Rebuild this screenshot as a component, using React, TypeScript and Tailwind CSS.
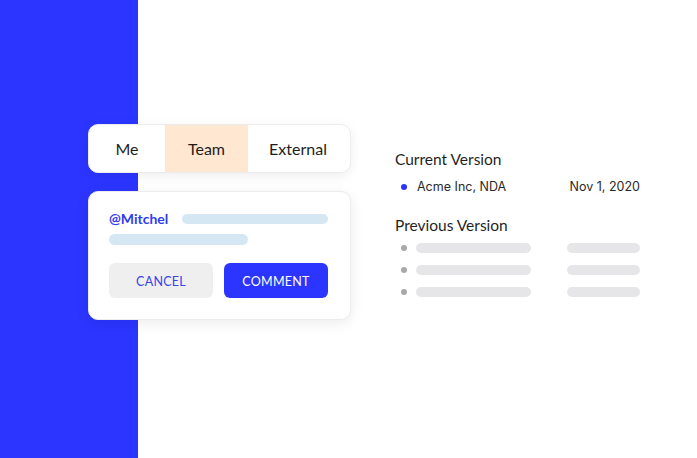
export default function App() {
  const prevRows = [0, 1, 2];

  return (
    <div
      className="w-[697px] h-[458px] overflow-hidden bg-[linear-gradient(to_right,#2b35ff_138px,#ffffff_138px)] flex items-start pt-[124px] pl-[88px]"
      style={{ fontFamily: 'Lato, "Open Sans", sans-serif' }}
    >
      {/* left column: tabs + comment card */}
      <div className="w-[263px] flex flex-col gap-[18px]">
        <div className="h-[49px] bg-white rounded-[10px] border border-[#ececec] shadow-[0_3px_12px_rgba(0,0,0,0.07)] flex overflow-hidden text-[16px] text-[#1d1d1d]">
          <div className="w-[76px] flex items-center justify-center pt-px">Me</div>
          <div className="w-[83px] flex items-center justify-center pt-px bg-[#ffe7d1]">Team</div>
          <div className="flex-1 flex items-center justify-center pt-px pr-[2px]">External</div>
        </div>

        <div className="h-[129px] bg-white rounded-[10px] border border-[#ececec] shadow-[0_3px_14px_rgba(0,0,0,0.08)] pl-[20px] pr-[22px] pt-[20px] flex flex-col">
          <div className="flex items-center h-[14px]">
            <span className="text-[14px] font-bold text-[#2f3cf2] w-[73px] leading-none">@Mitchel</span>
            <div className="flex-1 h-[10px] rounded-full bg-[#d6e7f4]" />
          </div>
          <div className="mt-[8px] w-[139px] h-[11px] rounded-full bg-[#d6e7f4]" />
          <div className="mt-[18px] flex gap-[11px] text-[12.5px] tracking-[0.02em]">
            <button className="w-[104px] h-[35px] rounded-[6px] bg-[#efefef] text-[#3a45e8] pt-[3px]">CANCEL</button>
            <button className="w-[104px] h-[35px] rounded-[6px] bg-[#2b35ff] text-white pt-[3px]">COMMENT</button>
          </div>
        </div>
      </div>

      {/* right column: versions */}
      <div className="ml-[44px] mt-[26px] w-[245px] flex flex-col text-[#1f1f1f]">
        <div className="text-[15.5px] leading-[18px]">Current Version</div>
        <div className="mt-[10px] h-[18px] flex items-center text-[13px] text-[#2a2a2a]">
          <span className="w-[6px] h-[6px] rounded-full bg-[#2b35ff] ml-[6px] mr-[10px]" />
          <span style={{ fontFamily: 'Inter, sans-serif' }} className="text-[12.5px]">Acme Inc, NDA</span>
          <span style={{ fontFamily: 'Inter, sans-serif' }} className="ml-auto text-[12.5px]">Nov 1, 2020</span>
        </div>
        <div className="mt-[20px] text-[15.5px] leading-[18px]">Previous Version</div>
        <div className="mt-[8px] flex flex-col gap-[10px]">
          {prevRows.map((r) => (
            <div key={r} className="h-[12px] flex items-center">
              <span className="w-[6px] h-[6px] rounded-full bg-[#a8a8a8] ml-[6px] mr-[9px]" />
              <div className="w-[115px] h-[10px] rounded-full bg-[#e6e5e8]" />
              <div className="ml-auto w-[73px] h-[10px] rounded-full bg-[#e6e5e8]" />
            </div>
          ))}
        </div>
      </div>
    </div>
  );
}
